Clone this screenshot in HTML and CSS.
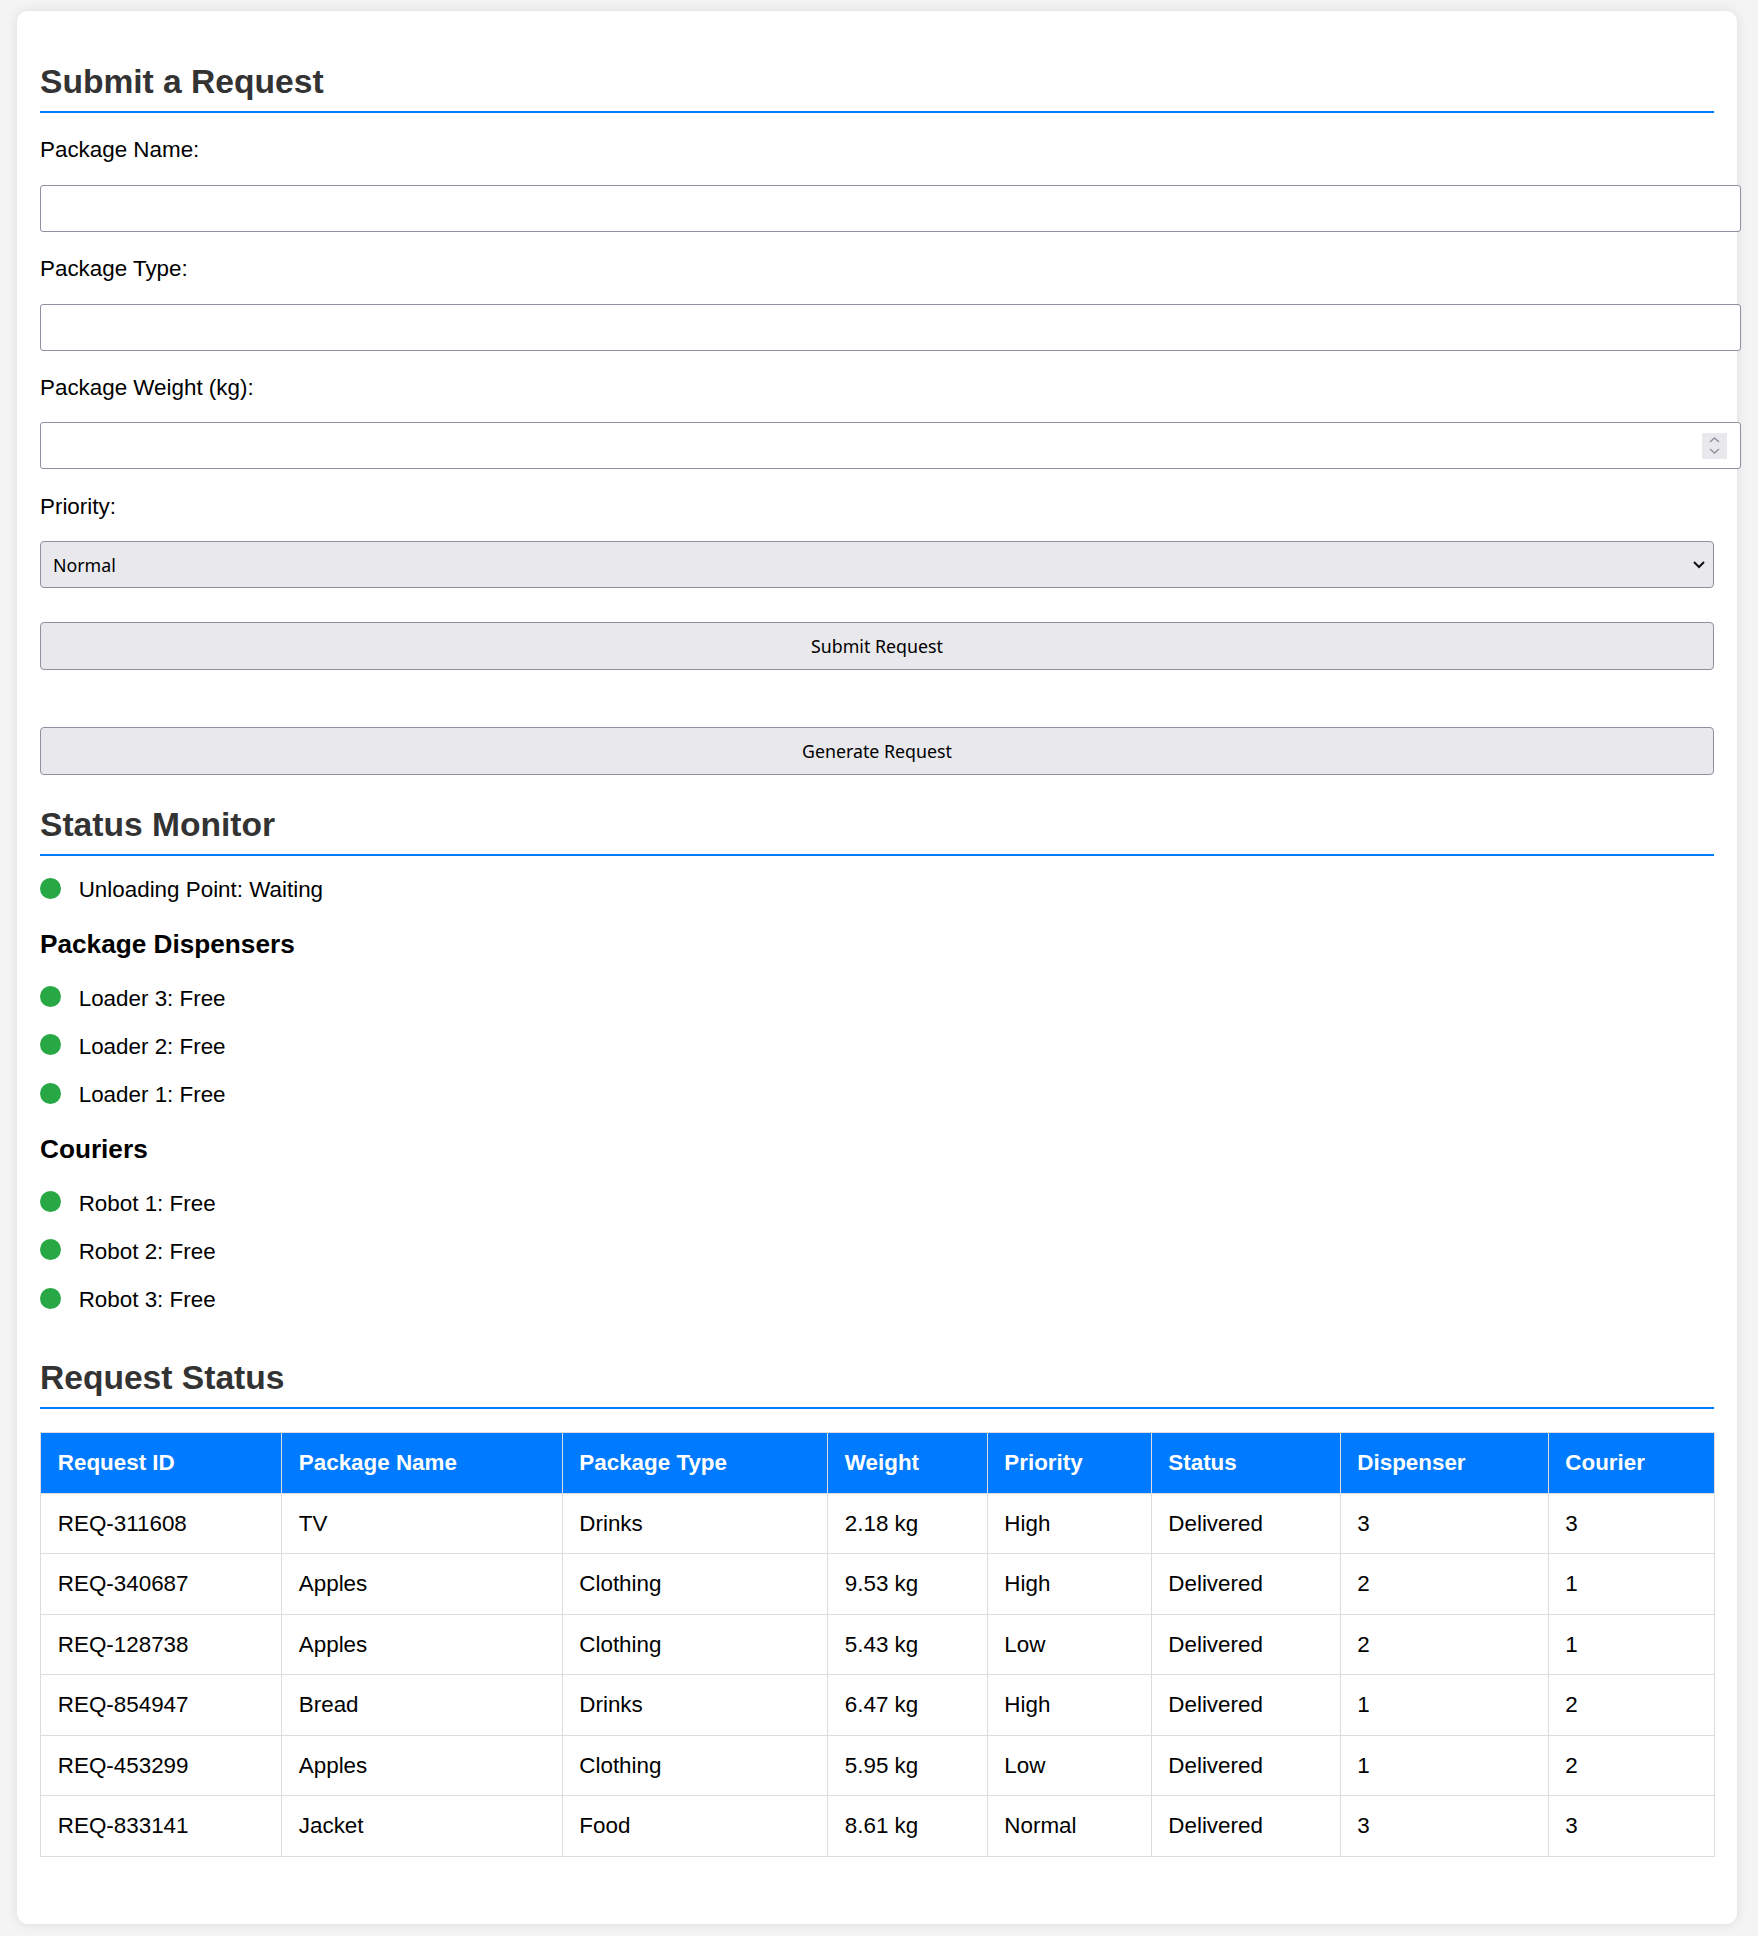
FILE: index.html
```html
<!DOCTYPE html>
<html lang="en">
<head>
<meta charset="utf-8">
<title>Package Requests</title>
<link rel="stylesheet" href="styles.css">
</head>
<body>
<div class="container">
  <h2 class="section-title first-title">Submit a Request</h2>
  <form class="request-form">
    <label class="field-label">Package Name:</label>
    <input class="field-input" type="text">
    <label class="field-label">Package Type:</label>
    <input class="field-input" type="text">
    <label class="field-label">Package Weight (kg):</label>
    <div class="number-wrap">
      <input class="field-input" type="text">
      <span class="spinner">
        <svg width="25" height="26" viewBox="0 0 25 26"><path d="M8 9 L12.5 5 L17 9" fill="none" stroke="#8f8f9d" stroke-width="1.4"/><path d="M8 16 L12.5 20 L17 16" fill="none" stroke="#8f8f9d" stroke-width="1.4"/></svg>
      </span>
    </div>
    <label class="field-label">Priority:</label>
    <div class="select-wrap">
      <select class="field-select"><option>Normal</option><option>High</option><option>Low</option></select>
      <svg class="select-arrow" width="12" height="8" viewBox="0 0 12 8"><path d="M1 1 L6 6 L11 1" fill="none" stroke="#111" stroke-width="2"/></svg>
    </div>
    <button type="button" class="btn submit-btn">Submit Request</button>
  </form>
  <button type="button" class="btn generate-btn">Generate Request</button>

  <h2 class="section-title status-title">Status Monitor</h2>
  <div class="status-item"><span class="dot"></span><span>Unloading Point: Waiting</span></div>
  <h3 class="group-title">Package Dispensers</h3>
  <div class="status-item"><span class="dot"></span><span>Loader 3: Free</span></div>
  <div class="status-item"><span class="dot"></span><span>Loader 2: Free</span></div>
  <div class="status-item"><span class="dot"></span><span>Loader 1: Free</span></div>
  <h3 class="group-title">Couriers</h3>
  <div class="status-item"><span class="dot"></span><span>Robot 1: Free</span></div>
  <div class="status-item"><span class="dot"></span><span>Robot 2: Free</span></div>
  <div class="status-item"><span class="dot"></span><span>Robot 3: Free</span></div>

  <h2 class="section-title request-title">Request Status</h2>
  <table class="request-table">
    <colgroup>
      <col class="c1"><col class="c2"><col class="c3"><col class="c4"><col class="c5"><col class="c6"><col class="c7"><col class="c8">
    </colgroup>
    <thead>
      <tr><th>Request ID</th><th>Package Name</th><th>Package Type</th><th>Weight</th><th>Priority</th><th>Status</th><th>Dispenser</th><th>Courier</th></tr>
    </thead>
    <tbody>
      <tr><td>REQ-311608</td><td>TV</td><td>Drinks</td><td>2.18 kg</td><td>High</td><td>Delivered</td><td>3</td><td>3</td></tr>
      <tr><td>REQ-340687</td><td>Apples</td><td>Clothing</td><td>9.53 kg</td><td>High</td><td>Delivered</td><td>2</td><td>1</td></tr>
      <tr><td>REQ-128738</td><td>Apples</td><td>Clothing</td><td>5.43 kg</td><td>Low</td><td>Delivered</td><td>2</td><td>1</td></tr>
      <tr><td>REQ-854947</td><td>Bread</td><td>Drinks</td><td>6.47 kg</td><td>High</td><td>Delivered</td><td>1</td><td>2</td></tr>
      <tr><td>REQ-453299</td><td>Apples</td><td>Clothing</td><td>5.95 kg</td><td>Low</td><td>Delivered</td><td>1</td><td>2</td></tr>
      <tr><td>REQ-833141</td><td>Jacket</td><td>Food</td><td>8.61 kg</td><td>Normal</td><td>Delivered</td><td>3</td><td>3</td></tr>
    </tbody>
  </table>
</div>
</body>
</html>
```
FILE: styles.css
```css
html, body {
  margin: 0;
  padding: 0;
}
body {
  background: #f4f4f4;
  font-family: "Liberation Sans", Arial, sans-serif;
  font-size: 22.4px;
  line-height: 26px;
  color: #000;
  padding: 11px 21px 12px 17px;
}
.container {
  background: #fff;
  border-radius: 11px;
  box-shadow: 0 0 12px rgba(0, 0, 0, 0.1);
  padding: 23px 23px 23px 23px;
  display: flow-root;
}
.section-title {
  margin: 0;
  font-size: 33.6px;
  font-weight: bold;
  line-height: 38px;
  color: #333;
  padding-bottom: 10.5px;
  border-bottom: 2px solid #007bff;
}
.first-title { margin-top: 28.5px; }
.status-title { margin-top: 31px; }
.request-title { margin-top: 45.6px; }

.request-form {
  margin: 0;
}
.field-label {
  display: block;
  margin-top: 24.3px;
  line-height: 26px;
}
.field-input {
  display: block;
  box-sizing: content-box;
  width: 100%;
  height: 45px;
  padding: 0 12.5px;
  margin: 21.5px 0 0 0;
  border: 1px solid #8f8f9d;
  border-radius: 3px;
  background: #fff;
  font-family: "Liberation Sans", Arial, sans-serif;
  font-size: 18.6px;
}
.number-wrap {
  position: relative;
  margin-top: 21.5px;
}
.number-wrap .field-input {
  margin-top: 0;
}
.spinner {
  position: absolute;
  right: -13px;
  top: 10.7px;
  width: 25px;
  height: 26px;
  background: #e9e9ed;
  display: flex;
}
.select-wrap {
  position: relative;
  margin-top: 21.5px;
}
.field-select {
  display: block;
  width: 100%;
  box-sizing: border-box;
  height: 47px;
  margin: 0;
  padding: 0 12px;
  -webkit-appearance: none;
  appearance: none;
  background: #e9e9ed;
  border: 1px solid #8f8f9d;
  border-radius: 4px;
  font-family: "Noto Sans", "DejaVu Sans", sans-serif;
  font-size: 17.8px;
  color: #000;
}
.select-arrow {
  position: absolute;
  right: 9px;
  top: 20px;
}
.btn {
  display: block;
  width: 100%;
  box-sizing: border-box;
  height: 47.5px;
  background: #e9e9ed;
  border: 1px solid #8f8f9d;
  border-radius: 4px;
  font-family: "Noto Sans", "DejaVu Sans", sans-serif;
  font-size: 17.8px;
  color: #000;
  padding: 0;
}
.submit-btn { margin-top: 34.2px; }
.generate-btn { margin-top: 57.5px; }

.status-item {
  display: flex;
  align-items: flex-start;
  line-height: 26px;
  margin-top: 22.35px;
}
.section-title + .status-item { margin-top: 20.9px; }
.group-title + .status-item { margin-top: 25.65px; }
.dot {
  flex: none;
  width: 21px;
  height: 21px;
  border-radius: 50%;
  background: #28a745;
  margin-top: 0.3px;
  margin-right: 17.7px;
}
.group-title {
  margin: 25.65px 0 0 0;
  font-size: 26.2px;
  font-weight: bold;
  line-height: 31px;
}

.request-table {
  margin-top: 23px;
  margin-bottom: 44.5px;
  width: 100%;
  border-collapse: collapse;
  table-layout: fixed;
}
.request-table th,
.request-table td {
  border: 1px solid #ddd;
  padding: 16.75px 16.8px;
  text-align: left;
  line-height: 26px;
  font-size: 22.4px;
}
.request-table th {
  background: #007bff;
  color: #fff;
  font-weight: bold;
}
.c1 { width: 241px; }
.c2 { width: 280.5px; }
.c3 { width: 265.5px; }
.c4 { width: 159.5px; }
.c5 { width: 164px; }
.c6 { width: 189px; }
.c7 { width: 208px; }
.c8 { width: 166px; }
```
